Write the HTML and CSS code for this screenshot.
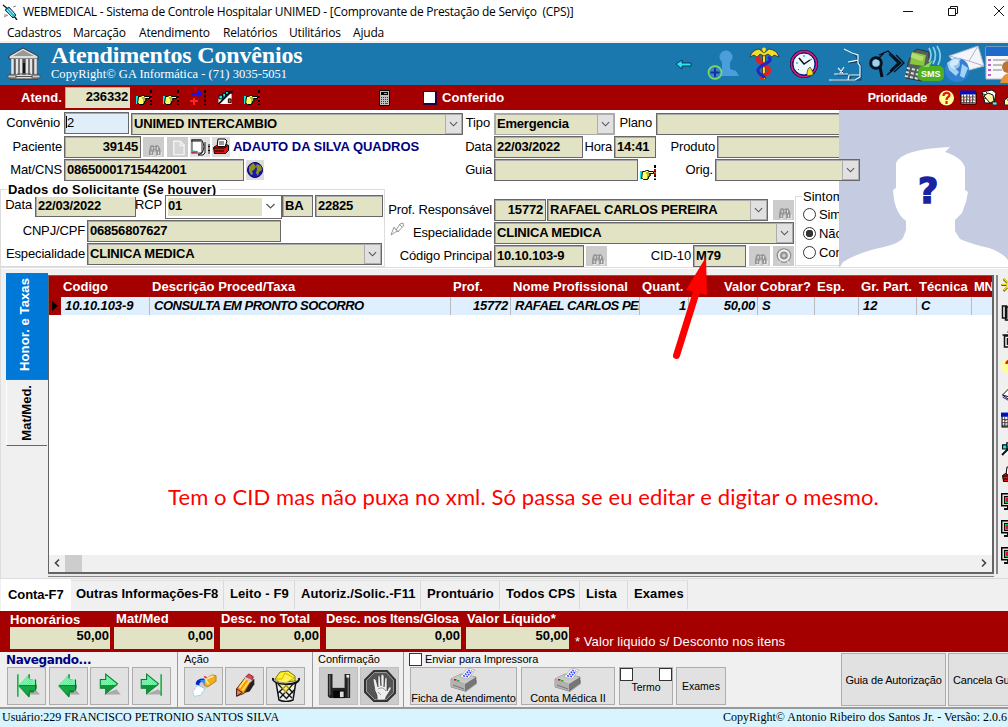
FILE: index.html
```html
<!DOCTYPE html>
<html lang="pt-BR">
<head>
<meta charset="utf-8">
<title>WEBMEDICAL</title>
<link rel="stylesheet" href="styles.css">
</head>
<body>
<svg class="defs" aria-hidden="true">
  <defs>
    <pattern id="checker" width="2" height="2" patternUnits="userSpaceOnUse"><rect width="2" height="2" fill="#ffff30"/><path d="M0 0h1v1H0zM1 1h1v1H1z" fill="#fff"/></pattern>
    <pattern id="greens" width="2" height="2" patternUnits="userSpaceOnUse"><rect width="2" height="2" fill="#3fe07a"/><path d="M0 0h1v1H0zM1 1h1v1H1z" fill="#a8ffd8"/></pattern>
  </defs>
  <symbol id="hand" viewBox="0 0 17 15">
    <path d="M0 6h2v8H0z" fill="#00f0f0"/><path d="M2.500 6.500h2l2-1h2v1h5v2h-4v1h1v1h-1v1h-1v2h-1v1h-4l-1-1h-1z" fill="#ffff66" stroke="#000"/><path d="M6 8h3M7 10h2M7 12h1" stroke="#000" stroke-width=".6"/>
    <path d="M15 0v15" stroke="#000" stroke-width="2" stroke-dasharray="3 1.500"/><path d="M14 4h2v2h-2zM14 8h2v2h-2z" fill="#d00"/>
  </symbol>
  <symbol id="bino" viewBox="0 0 22 22">
    <path d="M8 9h3v1h2V9h3l2 3 1 4v4h-5v-4h-1v-2h-1v2h-1v4H6v-4l1-5z" fill="#959595"/><path d="M9 11h1v3H9zM15 11h1v3h-1zM8 16h1v3H8zM16 16h1v3h-1zM12 11h1v2h-1z" fill="#eee"/><path d="M11.500 20v-3M19.500 21v-5M7 20.500h4M15 20.500h4" stroke="#f2f2f2" fill="none"/>
  </symbol>
  <symbol id="chev" viewBox="0 0 16 20"><path d="M4 8l4 4 4-4" fill="none" stroke="#555" stroke-width="1.200"/></symbol>
  <symbol id="grid" viewBox="0 0 17 15"><path d="M1 1.500h15v12H1z" fill="#fff" stroke="#000"/><path d="M0 0h16v4H0z" fill="#0010c0"/><path d="M1 6.500h14M1 9.500h14M1 12h14M3.500 4v9M6.500 4v9M9.500 4v9M12.500 4v9" stroke="#333" stroke-width=".8"/><path d="M4.500 7v5M7.500 5v6M10.500 7v5M13.500 5v6" stroke="#e00" stroke-width="1" stroke-dasharray="1 2"/></symbol>
  <symbol id="printer" viewBox="0 0 28 24">
    <path d="M5 20l11 4 11-8v-4z" fill="#aaa"/><path d="M1 11l10-5 15 3v6L15 23 1 19z" fill="#777" stroke="#555" stroke-width=".5"/><path d="M1 11l10-5 15 3-11 7z" fill="#c9c9c9"/><path d="M1 11l14 5v7L1 19z" fill="#b2b2b2"/><path d="M3 17l11 4" stroke="#777"/><path d="M10 9L18 0l7 2-7 9z" fill="#fff" stroke="#888" stroke-width=".5"/><path d="M13.500 8.500L19.500 2M16.500 9L22 3" stroke="#2638ff" stroke-width="1.900" stroke-dasharray="1.500 1"/><path d="M4 11h2.500v1.500H4z" fill="#e00"/><path d="M7 12h2.500v1.500H7z" fill="#0c0"/>
  </symbol>
  <symbol id="arrow" viewBox="0 0 22 24">
    <path d="M8 20h14l-5-6z" fill="#a8a8a8"/><path d="M2 12L12 1v5h3l4 5v3l-3 4h-4v5z" fill="#078a2c"/><path d="M2 11L12 1v5h6v5z" fill="url(#greens)"/><path d="M2 12h16v4h-6v5z" fill="#19a647"/><path d="M12 1v4M12 22v-4M18 6v10" stroke="#056b20"/>
  </symbol>
  <symbol id="calc" viewBox="0 0 11 16"><path d="M.5.5h10v15H.5z" fill="#c0c0c0" stroke="#000"/><path d="M2 2h7v3H2z" fill="#000"/><path d="M5 3h3v1H5z" fill="#0dd"/><path d="M2 7.500h7M2 9.500h7M2 11.500h7M2 13.500h4" stroke="#333" stroke-dasharray="1 1"/><path d="M6 13h3v1H6z" fill="#f00"/></symbol>
  <symbol id="boxes" viewBox="0 0 17 16"><path d="M1 15V8h8l6-6v13z" fill="#fff"/><path d="M1 15L13 3" stroke="#111" stroke-width="2"/><path d="M1.500 5.500h4v4h-4zM5.500 3.500h3v4h-3zM8.500 1.500h3v3h-3z" fill="#0cf0f0" stroke="#000"/><path d="M12 1h4v3h-4z" fill="#111"/><path d="M11.500 9.500h3v4h-3z" fill="#f33" stroke="#000"/></symbol>
  <symbol id="monitor" viewBox="0 0 18 17"><path d="M.7.700h16v12H.7z" fill="#ddd" stroke="#000" stroke-width="1.400"/><path d="M3 3h12v8H3z" fill="#000"/><path d="M4.500 4.500h10v5h-10z" fill="#e00050" stroke="#0d2" stroke-width="1.200"/><path d="M6 13h7v2h2v2H3v-2h3z" fill="#111"/></symbol>
  <symbol id="printred" viewBox="0 0 18 17"><path d="M6 1h7l2 2-2 6H5z" fill="#fff" stroke="#000"/><path d="M7 4h5M7 6h5" stroke="#333"/><path d="M1.500 9.500l3-2 2 1h6l2-2 2 1v5l-3 3h-11z" fill="#e01010" stroke="#000"/><path d="M2 10h10l3-2M3 13h9" stroke="#000" fill="none"/></symbol>
</svg>

<div class="app">
  <header class="titlebar">
    <svg class="app-icon" viewBox="0 0 16 16"><path d="M1 1l5 4M4 4l8 9M12 12l3 4" stroke="#111" stroke-width="1.300"/><path d="M3 6l4-3 7 8-3 3z" fill="#35b5cb" stroke="#145"/><path d="M5 6l5 6M7 5l5 5" stroke="#fff" stroke-width=".7"/><path d="M2 13l4-2M2 11h3M11 3l3-1" stroke="#888"/></svg>
    <h1 class="window-title">WEBMEDICAL - Sistema de Controle Hospitalar UNIMED - [Comprovante de Prestação de Serviço&nbsp; (CPS)]</h1>
    <svg class="window-controls" viewBox="0 0 110 20" fill="none" stroke="#111"><path d="M5 9.500h10M50.500 6.500h7v7h-7zM52.500 6V4.500h7v7H58M96 4l10 10M106 4L96 14"/></svg>
  </header>
  <nav class="menubar"><span>Cadastros</span><span>Marcação</span><span>Atendimento</span><span>Relatórios</span><span>Utilitários</span><span>Ajuda</span></nav>

  <section class="banner">
    <svg class="temple" viewBox="0 0 34 33"><path d="M2 9L16 1l15 8v3H2zM3 27h28v5H3z" fill="#ddd" stroke="#333"/><path d="M6 9l10-6 11 6z" fill="#999"/><path d="M4 12h26v14H4z" fill="#555"/><path d="M5.500 12v15M10 12v15M14 12v16M20 12v16M24 12v15M28.500 12v15" stroke="#e5e5e5" stroke-width="2.500"/><path d="M1 28h8v3H1zM25 28h8v3h-8zM10 27h14M9 29.500h16" fill="#ccc" stroke="#555"/><path d="M16 16h2v10h-2z" fill="#111"/></svg>
    <div class="banner-text"><h2>Atendimentos Convênios</h2><p>CopyRight© GA Informática - (71) 3035-5051</p></div>
    <svg class="banner-icons" viewBox="0 0 332 42">
      <path d="M0 21l6-4v3h9v3H6v3z" fill="#22e6ee" stroke="#024" stroke-width=".8"/>
      <g fill="#4a9edb"><circle cx="50" cy="14" r="6.500"/><path d="M46 17h8v9l6 2 3 5H38l8-5z"/></g><circle cx="39" cy="29.500" r="6.500" fill="#3488bc" stroke="#7be05e" stroke-width="1.600"/><path d="M39 25v9M34.500 29.500h9" stroke="#1b2caa" stroke-width="2"/>
      <g><path d="M88 6v30" stroke="#111" stroke-width="4"/><path d="M88 6v30" stroke="#f4dc25" stroke-width="2.500"/><path d="M74 14q2-7 9-8l5 4 5-4q8 1 10 8l-5-2-2 2-4-3-4 2-4-2-3 3-3-2z" fill="#f2de28" stroke="#222" stroke-width=".7"/><path d="M84 14c-10 4 11 8 9 14s-7 2-7 8" fill="none" stroke="#d22" stroke-width="4"/><path d="M92 14c9 5-12 8-10 14s6 3 6 7" fill="none" stroke="#2028c8" stroke-width="3"/><circle cx="88" cy="6.500" r="2" fill="#f5e025"/></g>
      <circle cx="128" cy="21" r="14" fill="#050520"/><circle cx="128" cy="21" r="12.500" fill="none" stroke="#d81b80" stroke-width="1.800"/><circle cx="128" cy="21" r="11" fill="#eef8ff" stroke="#001b80"/><path d="M123 15l5 6 6-4" fill="none" stroke="#111" stroke-width="1.500"/><path d="M128 12v2M120 20h2M122 27l1-1M136 16l-2 1" stroke="#08c"/><path d="M131 30l1-4 2-2 3 5v3l-6 1z" fill="#f5df20" stroke="#333" stroke-width=".7"/>
      <g fill="none" stroke="#102b40" stroke-width=".8" transform="translate(1 1)"><path d="M169 6l7 4 4 3v5l-8 1M180 14l4 8v10h-10l-1 4M160 31h14M155 36h29v-5M163 25l5 5"/></g><g fill="none" stroke="#e8f4fa" stroke-width="1.200"><path d="M168 6l8 4 6 2v5l-10 2 7-1M182 14v6l2 3v9h-11l-1 5M158 31h14M153 37h26l5-3v-4M162 25l5 5M168 24l-4 6"/></g>
      <g fill="none" stroke="#080d18"><path d="M203 12l9-4 13 12-14 12M213 11l9 9-8 8M216 12l8 8-9 9M220 12l8 8-10 9M201 17l7-7" stroke-width="1.300"/><circle cx="200" cy="20" r="5.500" stroke-width="2.500"/><path d="M204 24l2 10" stroke-width="3"/><circle cx="200" cy="20" r="3.500" fill="#a8cde8" stroke="none"/></g>
      <g><path d="M236 10l5-4 12 3v24l-8 5-15-3 2-15z" fill="#555f60" stroke="#2a3536"/><path d="M236 9l14 3-2 11-14-2z" fill="#8ac63d"/><path d="M235 12l12 4" stroke="#d9f5a8" stroke-width="5" opacity=".5"/><path d="M231 25l14 3M230 29l14 3M229 33l14 3" stroke="#d7dfdf" stroke-width="2" stroke-dasharray="3 2"/><rect x="242" y="23" width="26" height="15" rx="5" fill="#4faf22"/><path d="M253 24l4-7-10 7z" fill="#8fda55"/><path d="M253 5q4 7 0 14M257 4q5 8 0 17M261 3q6 9 1 19" fill="none" stroke="#7fd3ec" stroke-width="1.700"/><text class="sms" x="245" y="34">SMS</text></g>
      <g><path d="M273 13l29-10 6 20-22 6z" fill="#f4f5fb" stroke="#b0b8cc"/><path d="M273 13l20 5 9-15M293 18l15 5" fill="none" stroke="#a9b3cc"/><circle cx="281" cy="27" r="12" fill="#3280d4"/><path d="M271 20q9-7 14-4l-4 6-4 1 6 6-3 4-7-6zM286 21l6 4-4 10-4-2z" fill="#a4d4f5"/><circle cx="279" cy="21" r="5" fill="#fff" opacity=".5"/></g>
      <g><path d="M310 4h26v32h-26z" fill="#f8f8fa" stroke="#b9bfca"/><path d="M310 4h24v9h-24z" fill="#1b6acc"/><path d="M312 17h3M312 22h3M312 27h3M312 32h3" stroke="#c25ad5" stroke-width="2"/><path d="M317 17h18M317 22h9M317 27h9" stroke="#aaa" stroke-width="1.500"/><circle cx="332" cy="24" r="6" fill="#bc7434"/><path d="M324 40q2-9 9-10v10z" fill="#e8923a"/></g>
    </svg>
  </section>

  <section class="recordbar">
    <label class="record-label">Atend.</label><output class="box record-number">236332</output>
    <div class="hands"><svg><use href="#hand"/></svg><svg><use href="#hand"/></svg><svg viewBox="0 0 17 15"><path d="M1 3h7V0l5 3.500L8 7V5H1z" fill="#1414f0"/><path d="M3 8h2v2h3v2H5v3H3v-3H0v-2h3z" fill="#f22"/><path d="M15 0v15" stroke="#200" stroke-width="2" stroke-dasharray="3 1.500"/></svg><svg><use href="#boxes"/></svg><svg><use href="#hand"/></svg></div>
    <svg class="calc"><use href="#calc"/></svg>
    <label class="checked-label"><i class="bigcheck"></i>Conferido</label>
    <span class="priority">Prioridade</span>
    <div class="recordicons"><svg viewBox="0 0 16 16"><circle cx="8" cy="8" r="7.500" fill="url(#checker)"/><path d="M5 6c0-4 6-4 6-1 0 2-3 2-3 5M8 11v3" fill="none" stroke="#e31515" stroke-width="2.200"/></svg><svg><use href="#grid"/></svg><svg viewBox="0 0 17 16"><path d="M1 2l10-2 4 3-2 10H4z" fill="#fff" stroke="#111"/><path d="M2 4l10 2M3 8l9 2M5 2l8 9" stroke="#222"/><path d="M3 6l4-3 5 2 1 6-4 2z" fill="#fff7a0" stroke="#111"/><path d="M11 12h5v3h-4z" fill="#7de7e7" stroke="#333"/></svg><svg viewBox="0 0 16 16"><path d="M1 10l3-2V4l4-4 5 4v5l3 3v3H1z" fill="url(#checker)" stroke="#222"/><path d="M4 10h8" stroke="#d00" stroke-width="2"/></svg></div>
  </section>

  <main class="form">
    <div class="row r1"><label>Convênio</label><output class="box active"><i class="caret"></i>2</output><output class="box combo">UNIMED INTERCAMBIO<svg><use href="#chev"/></svg></output><label>Tipo</label><output class="box combo typebox">Emergencia<svg><use href="#chev"/></svg></output><label>Plano</label><output class="box"></output></div>
    <div class="row r2"><label>Paciente</label><output class="box right">39145</output><span class="mini"><svg><use href="#bino"/></svg></span><span class="mini"><svg viewBox="0 0 21 21"><path d="M6.500 4.500h7l4 4v10h-11zM13.500 5v4h4" fill="#d6d6d6" stroke="#f2f2f2" stroke-width="1.500"/></svg></span><span class="mini light"><svg viewBox="0 0 20 20"><path d="M2 3h10v13H2z" fill="#fff" stroke="#333"/><path d="M2 2v3M4 2v3M6 2v3M8 2v3M10 2v3" stroke="#111"/><path d="M12 4q4 5 0 12l-4 2h5l2-2V5" fill="#eee" stroke="#111"/><path d="M2 14l6 1" stroke="#00bcd0" stroke-width="1.500"/><path d="M1 16l6-1" stroke="#d22"/><path d="M19 7v10M18 9.500h2M18 13.500h2" stroke="#111"/></svg></span><span class="mini narrow"><svg viewBox="0 0 18 20"><use href="#printred" y="1" width="18" height="17"/></svg></span><strong class="patient">ADAUTO DA SILVA QUADROS</strong><label>Data</label><output class="box">22/03/2022</output><label>Hora</label><output class="box hour">14:41</output><label>Produto</label><output class="box"></output></div>
    <div class="row r3"><label>Mat/CNS</label><output class="box">08650001715442001</output><span class="mini globe"><svg viewBox="0 0 18 20"><circle cx="9" cy="10" r="7.500" fill="#1717bd" stroke="#05055c"/><path d="M3 7l4-4 2 2 1 2-2 3-2 1 1 3-2 1-2-4zM11 4l4 2 1 4-3 2-1 4-2-3 1-4-1-3z" fill="#8e9020"/></svg></span><label>Guia</label><output class="box">&nbsp;</output><svg class="pointer"><use href="#hand"/></svg><label>Orig.</label><output class="box combo origin"><svg><use href="#chev"/></svg></output></div>
    <div class="lower">
      <fieldset class="requester"><legend>Dados do Solicitante (Se houver)</legend>
        <div class="row q1"><label>Data</label><output class="box">22/03/2022</output><label>RCP</label><output class="box combo rcp"><b>01</b><svg><use href="#chev"/></svg></output><output class="box">BA</output><output class="box">22825</output></div>
        <div class="row q2"><label>CNPJ/CPF</label><output class="box">06856807627</output></div>
        <div class="row q3"><label>Especialidade</label><output class="box combo">CLINICA MEDICA<svg><use href="#chev"/></svg></output></div>
      </fieldset>
      <div class="responsible">
        <div class="row p1"><label>Prof. Responsável</label><output class="box right">15772</output><output class="box combo">RAFAEL CARLOS PEREIRA<svg><use href="#chev"/></svg></output><span class="mini"><svg><use href="#bino"/></svg></span></div>
        <div class="row p2"><svg class="pin" viewBox="0 0 14 14"><path d="M1 13l3-8 2 3 4-6 3-1 .5 3-5 5-3 1zM6 8l3 2M9 2l3 3" fill="none" stroke="#999"/></svg><label>Especialidade</label><output class="box combo">CLINICA MEDICA<svg><use href="#chev"/></svg></output></div>
        <div class="row p3"><label>Código Principal</label><output class="box">10.10.103-9</output><span class="mini"><svg><use href="#bino"/></svg></span><label>CID-10</label><output class="box">M79</output><span class="mini"><svg><use href="#bino"/></svg></span><span class="mini"><svg viewBox="0 0 21 21"><g fill="none"><circle cx="11" cy="10" r="7" stroke="#909090" stroke-width="1.500"/><circle cx="11" cy="10" r="5.500" stroke="#f5f5f5" stroke-width="1.500"/><circle cx="11" cy="10" r="3" stroke="#909090" stroke-width="2"/></g><path d="M14 15l3 4M8 15l-3 3" stroke="#eee"/></svg></span></div>
      </div>
      <fieldset class="symptoms"><legend>Sintomas</legend><label><i></i>Sim</label><label><i class="on"></i>Não</label><label><i></i>Continuo</label></fieldset>
    </div>
    <svg class="photo" viewBox="0 0 169 157"><path fill="#c5cce1" d="M0 0h169v157H0z"/><path d="M1 157L4 152Q20 142 45 137 61 133 64 128L67 120V111Q60 106 57 97L55 90 54 80 57 78V53Q63 39 111 37L106 42Q124 48 126 58V80L129 82 127 92 123 103 116 110V121L121 129Q132 134 150 138 164 143 169 150V157z" fill="#fff"/><text class="question" x="79" y="93">?</text></svg>
  </main>

  <section class="workspace">
    <div class="side-tabs"><div class="side-tab selected"><span>Honor. e Taxas</span></div><div class="side-tab"><span>Mat/Med.</span></div></div>
    <div class="grid-panel">
      <div class="grid-row head"><i></i><b>Codigo</b><b>Descrição Proced/Taxa</b><b>Prof.</b><b>Nome Profissional</b><b>Quant.</b><b class="right">Valor</b><b>Cobrar?</b><b>Esp.</b><b>Gr. Part.</b><b>Técnica</b><b class="last">MN</b></div>
      <div class="grid-row data"><i><svg viewBox="0 0 12 18"><path d="M3 4l6 5-6 5z"/></svg></i><b>10.10.103-9</b><b>CONSULTA EM PRONTO SOCORRO</b><b class="right">15772</b><b>RAFAEL CARLOS PEREIRA</b><b class="right">1</b><b class="right">50,00</b><b>S</b><b></b><b>12</b><b>C</b><b></b></div>
      <div class="grid-empty"></div>
      <div class="scrollbar"><svg viewBox="0 0 16 16"><path d="M10 4.500L6.500 8l3.500 3.500" fill="none" stroke="#444" stroke-width="1.600"/></svg><i></i><svg viewBox="0 0 16 16"><path d="M6 4.500L9.500 8 6 11.500" fill="none" stroke="#444" stroke-width="1.600"/></svg></div>
    </div>
    <aside class="tools">
      <svg viewBox="0 0 17 17"><path d="M8 0v4M0 8h5M2 2l4 4M2 14l4-4" stroke="#222" stroke-width="2"/><path d="M8 0v4M0 7.500h5M2 1.500l4 4M2 13.500l4-4" stroke="#f0e000" stroke-width="1.600"/><circle cx="9" cy="8" r="4" fill="#ffef20"/></svg>
      <svg viewBox="0 0 17 17"><path d="M1 2h4v12H1zM4 3h3v13H4zM7 4h8v13H7z" fill="#fff" stroke="#111" stroke-width="1.500"/></svg>
      <svg viewBox="0 0 17 17"><path d="M3 5h10v11H3zM1 4h14M6 1h4v3M6 7v7M9 7v7" fill="none" stroke="#111" stroke-width="1.500"/></svg>
      <svg viewBox="0 0 17 17"><circle cx="8" cy="8" r="8" fill="url(#checker)"/><path d="M5 6c0-4 6-4 6-1 0 2-3 2-3 5M8 12v2" fill="none" stroke="#e31515" stroke-width="2.500"/></svg>
      <svg viewBox="0 0 17 17"><path d="M1 10l8-8 7 4-8 9zM1 10l7 2" fill="#fff" stroke="#111"/><path d="M1 12l7 4 8-8" stroke="#23b" fill="none"/></svg>
      <svg><use href="#grid"/></svg><svg><use href="#boxes"/></svg><svg><use href="#printred"/></svg><svg><use href="#monitor"/></svg><svg><use href="#monitor"/></svg><svg><use href="#monitor"/></svg>
    </aside>
    <p class="annotation">Tem o CID mas não puxa no xml. Só passa se eu editar e digitar o mesmo.</p>
  </section>

  <nav class="tabs"><span class="current">Conta-F7</span><span>Outras Informações-F8</span><span>Leito - F9</span><span>Autoriz./Solic.-F11</span><span>Prontuário</span><span>Todos CPS</span><span>Lista</span><span>Exames</span></nav>

  <section class="totals">
    <div class="t1"><label>Honorários</label><output>50,00</output></div><div class="t2"><label>Mat/Med</label><output>0,00</output></div><div class="t3"><label>Desc. no Total</label><output>0,00</output></div><div class="t4"><label>Desc. nos Itens/Glosa</label><output>0,00</output></div><div class="t5"><label>Valor Líquido*</label><output>50,00</output></div><p>* Valor liquido s/ Desconto nos itens</p>
  </section>

  <section class="actions">
    <div class="group nav-group"><h3>Navegando...</h3><div class="buttons">
      <button><svg viewBox="0 0 24 26"><path d="M3.500 2v21" stroke="#12b83a" stroke-width="1.500"/><use href="#arrow" x="2" y="1" width="22" height="24"/></svg></button>
      <button><svg viewBox="0 0 24 26"><use href="#arrow" x="1" y="1" width="22" height="24"/></svg></button>
      <button><svg viewBox="0 0 24 26"><path d="M6 21h16l-4-5z" fill="#aaa"/><path d="M3 7h5V2l11 9-11 9v-5H3z" fill="url(#greens)" stroke="#07802a"/><path d="M3 12h16l-11 8v-5H3z" fill="#14933c"/></svg></button>
      <button><svg viewBox="0 0 24 26"><path d="M6 21h16l-4-5z" fill="#aaa"/><path d="M2 7h5V2l11 9-11 9v-5H2z" fill="url(#greens)" stroke="#07802a"/><path d="M2 12h16l-11 8v-5H2z" fill="#14933c"/><path d="M20.500 2v20" stroke="#12b83a" stroke-width="1.500"/></svg></button></div></div>
    <div class="group action-group"><h3>Ação</h3><div class="buttons">
      <button><svg viewBox="0 0 28 28"><path d="M9 9l12 2-13 14z" fill="#ccc"/><path d="M14 7l9-5 4 1v6l-9 6-4-2z" fill="#f4ad18" stroke="#8e6a15" stroke-width=".7"/><path d="M15 7l9-4M16 8l3 4" stroke="#ffe29a" stroke-width="2"/><path d="M5 12q0-6 9-6l1 3q-7 0-6 5z" fill="#0a22ce"/><path d="M9 8l6-1v5z" fill="#2e91ff"/><path d="M2 20l5-7 8 4-5 7-7 1z" fill="#fff" stroke="#4fc0e6" stroke-dasharray="1 1"/><path d="M14 4l3 1" stroke="#e22" stroke-width="1.500"/></svg></button>
      <button><svg viewBox="0 0 28 28"><path d="M8 23l11-3 5-8v-6z" fill="#222"/><path d="M5 17L15 4l6 4-8 14-8 3z" fill="#f7901b" stroke="#5a2d10"/><path d="M8 16l8-11M11 19l8-11" stroke="#ffe14c" stroke-width="2"/><path d="M15 4l3-3 5 3-2 5z" fill="#e7405d" stroke="#722"/><path d="M14 5l7 4" stroke="#ccc" stroke-width="2.500"/><path d="M5 17l6 4-6 4z" fill="#d08b75" stroke="#411"/></svg></button>
      <button><svg class="large" viewBox="0 0 30 32"><path d="M5 12l20-1-3 19q-7 3-14 0z" fill="#eee" stroke="#111" stroke-width="1.500"/><path d="M7 14l14 14M13 13l9 10M8 21l8 8M23 13L9 28M18 13L7 23M23 20l-8 9" stroke="#111" stroke-width="1.300"/><path d="M9 14h12l-7 10z" fill="#ffef26" opacity=".6"/><path d="M4 9l5-7 8-1 7 5v5l-14 1z" fill="#ffef26" stroke="#76720a"/><path d="M4 9h7l3-6 9 5-8 5-7-1z" fill="#fff04c" stroke="#998c12" stroke-width=".6"/><path d="M2 8q-1 5 13 6 14 0 13-6" fill="none" stroke="#111" stroke-width="2"/><path d="M3 10q3 3 12 3 11-1 12-4" fill="none" stroke="#ddd" stroke-width=".8"/></svg></button></div></div>
    <div class="group confirm-group"><h3>Confirmação</h3><div class="buttons">
      <button class="disabled"><svg viewBox="0 0 28 28"><path d="M2 1h24v26H4l-2-2z" fill="#222"/><path d="M7 1h13v15H7z" fill="#ccc"/><path d="M8 19h12v8H8z" fill="#070707"/><path d="M15 20h4v6h-4z" fill="#ddd"/><path d="M4 2v22M24 5v21" stroke="#686868" stroke-width="1.500"/><path d="M22 2h3v3h-3z" fill="#eee"/></svg></button>
      <button class="disabled"><svg class="large" viewBox="0 0 32 32"><path d="M10 1h13l8 9v13l-8 8H10l-9-9V10z" fill="#555" stroke="#333" stroke-width="2"/><path d="M10.500 2.500h12l7 8v12l-7 7h-12l-8-8v-11z" fill="none" stroke="#aaa" stroke-width=".8"/><path d="M9 9q2-1 3 1l2 7V7q0-3 2-1l1 10V5q2-2 3 1v11l1-9q2-2 2 1v12l2-4q3-1 2 2l-5 8-1 3H13q1-5-2-9z" fill="#eee" stroke="#333" stroke-width=".6"/><path d="M14 19q5-3 8 2M14 22l3 3" stroke="#999" fill="none"/></svg></button></div></div>
    <div class="group print-group"><h3><i class="check"></i>Enviar para Impressora</h3><div class="buttons"><button class="ficha"><svg><use href="#printer"/></svg><span>Ficha de Atendimento</span></button><button class="conta"><svg><use href="#printer"/></svg><span>Conta Médica II</span></button><button class="termo"><i class="check"></i><span>Termo</span><i class="check"></i></button><button class="exams">Exames</button></div></div>
    <div class="guides"><button>Guia de Autorização</button><button class="cancel">Cancela Guia</button></div>
  </section>
  <footer class="status"><span>Usuário:229 FRANCISCO PETRONIO SANTOS SILVA</span><span>CopyRight© Antonio Ribeiro dos Santos Jr. - Versão: 2.0.6</span></footer>
  <svg class="red-arrow" viewBox="0 0 45 110"><path d="M8.500 101.500L29 36" stroke="#f00" stroke-width="7" stroke-linecap="round"/><path d="M38 3L18 36l21 5z" fill="#f00"/></svg>
</div>
</body>
</html>
```
FILE: styles.css
```css
* { box-sizing: border-box; }
body { margin: 0; background: #fff; font: 13px/16px "Liberation Sans", Arial, sans-serif; color: #000; }
h1, h2, h3, p { margin: 0; font-weight: normal; }
button { font: inherit; color: inherit; padding: 0; margin: 0; border: 1px solid #adadad; background: #e1e1e1; }
svg { display: block; flex: none; }
.defs { position: absolute; width: 0; height: 0; }
.app { position: relative; width: 1008px; height: 727px; overflow: hidden; display: flex; flex-direction: column; }
.app > section, .app > nav, .app > header, .app > main, .app > footer { flex: none; }

.titlebar { height: 23px; display: flex; align-items: center; padding-left: 2px; }
.app-icon { width: 16px; height: 16px; margin-right: 5px; }
.window-title { font: 12px/16px "Open Sans", sans-serif; letter-spacing: -.26px; white-space: nowrap; }
.window-controls { width: 110px; height: 20px; margin-left: auto; }
.menubar { height: 20px; border-bottom: 2px solid #f0f0f0; display: grid; grid-template-columns: 66px 66px 84px 66px 64px 60px; padding-left: 7px; font: 12px/19px "Open Sans", sans-serif; letter-spacing: -.2px; }

.banner { height: 42px; background: #1b78ae; color: #fff; display: flex; }
.temple { width: 34px; height: 33px; margin: 4px 10px 0 7px; }
.banner-text { font-family: "Liberation Serif", serif; white-space: nowrap; }
.banner-text h2 { font-size: 24px; line-height: 24px; font-weight: bold; letter-spacing: -.18px; }
.banner-text p { font-size: 12.500px; line-height: 14px; letter-spacing: .03px; }
.banner-icons { width: 332px; height: 42px; margin-left: auto; }
.sms { font: bold 9px "Liberation Sans", sans-serif; fill: #fff; }

.recordbar { height: 25px; background: #a40000; color: #fff; display: flex; align-items: center; font-weight: bold; }
.record-label { width: 65px; padding-right: 3px; text-align: right; letter-spacing: .1px; }
.box { background: #e2e2c4; color: #000; border: 1px solid #686868; box-shadow: inset 1px 1px #aaa; display: block; height: 22px; padding: 2px 2px; font-weight: bold; line-height: 16px; letter-spacing: -.2px; white-space: nowrap; overflow: hidden; }
.record-number { width: 65px; height: 21px; text-align: right; border: 0; }
.hands { display: grid; grid-template-columns: repeat(5, 27px); margin-left: 6px; }
.hands svg { width: 17px; height: 15px; }
.calc { width: 11px; height: 16px; margin-left: 108px; }
.checked-label { display: flex; gap: 5px; margin-left: 33px; letter-spacing: .1px; align-items: center; }
.bigcheck { width: 14px; height: 14px; background: #fff; border: 1px solid #200040; border-width: 1px 2px 2px 1px; }
.priority { margin-left: auto; font-size: 12.500px; letter-spacing: -.25px; }
.recordicons { display: grid; grid-template-columns: repeat(4, 21.500px); width: 70px; margin-left: 11px; overflow: hidden; }
.recordicons svg { width: 17px; height: 16px; }

.form { position: relative; height: 157px; overflow: hidden; }
.row { display: grid; height: 23px; }
.row > .box { margin-right: 2px; }
.row label { justify-self: end; white-space: nowrap; padding: 3px 2px 0 0; letter-spacing: -.15px; }
.r1 { height: 26px; padding-top: 3px; grid-template-columns: 64px 67px 334px 29px 123px 39px 204px; }
.row.r1 > label { padding-right: 4px; padding-top: 2px; }
.r2 { grid-template-columns: 64px 79px 24px 23px 22px 21px 232px 29px 91px 29px 55px 48px 143px; }
.r3 { grid-template-columns: 64px 182px 219px 29px 146px 48px 27px 145px; }
.right { text-align: right; }
.box.active { background: #e0eefa; margin-top: -1px; margin-right: 2px; font-weight: normal; padding-left: 1px; }
.row > .hour { margin-right: 13px; }
.caret { display: inline-block; width: 1px; height: 12px; background: #000; vertical-align: -1px; }
.combo { position: relative; display: flex; justify-content: space-between; padding: 2px 0 0 2px; }
.combo svg { width: 17px; height: 20px; margin: -2px 0 0; background: #e1e1e1; border: 1px solid #adadad; }
.typebox { border-color: #aaa; }
.row > .origin { margin: 0; z-index: 3; justify-content: flex-end; }
.patient { color: #000080; letter-spacing: -.03px; padding-top: 3px; white-space: nowrap; }
.mini { width: 21px; height: 20px; margin-top: 1px; background: #ccc; }
.mini svg { width: 100%; height: 20px; }
.mini.light { width: 20px; background: #e3e3e3; }
.mini.narrow, .mini.globe { width: 18px; background: #ddd; }
.pointer { width: 17px; height: 15px; margin-top: 6px; }

.lower { display: flex; height: 85px; }
fieldset { margin: 0; padding: 0; min-width: 0; border: 1px solid #dcdcdc; }
.requester { position: relative; width: 385px; height: 78px; margin-top: 7px; }
.requester legend { position: absolute; top: -8px; left: 6px; background: #fff; padding: 0 4px 0 1px; font-weight: bold; letter-spacing: .14px; line-height: 15px; }
.requester .row { margin-left: -1px; }
.q1 { height: 25px; margin-top: 5px; grid-template-columns: 35px 103px 27px 117px 33px 70px; }
.q2 { grid-template-columns: 87px 196px; }
.q3 { grid-template-columns: 87px 297px; }
.row.q1 > label { padding: 2px 3px 0 0; }
.row.q1 > .rcp { height: 24px; margin-right: 0; background: #fff; box-shadow: none; padding: 2px 2px; }
.rcp b { width: 94px; height: 18px; background: #e2e2c4; }
.rcp svg { background: #fff; border: 0; }
.responsible { width: 410px; padding-top: 17px; }
.p1 { grid-template-columns: 109px 53px 226px 22px; }
.row.p1 > .box:nth-child(2) { margin-right: 1px; }
.row.p1 > .combo { margin-right: 5px; }
.p2 { grid-template-columns: 20px 89px 302px; }
.pin { width: 14px; height: 14px; margin-left: 5px; }
.p3 { grid-template-columns: 109px 92px 22px 85px 56px 24px 22px; }
.row.p3 > .box:nth-of-type(2) { margin-right: 3px; }
.symptoms { position: relative; width: 90px; height: 70px; margin-top: 14px; padding-top: 8px; }
.symptoms legend { position: absolute; top: -8px; left: 6px; padding: 0 1px; background: #fff; }
.symptoms label { display: flex; gap: 3px; height: 19px; padding-left: 7px; align-items: center; letter-spacing: -.1px; }
.symptoms i { width: 13px; height: 13px; border: 1px solid #333; border-radius: 50%; }
.symptoms i.on { background: radial-gradient(#333 0 3.500px, #fff 4px); }
.photo { position: absolute; z-index: 2; left: 839px; top: 0; width: 169px; height: 157px; }
.question { font: bold 35px "DejaVu Sans", sans-serif; fill: #1a23a0; stroke: #1a23a0; stroke-width: 1.500px; }

.workspace { position: relative; height: 311px; background: #f0f0f0; border-top: 1px solid #ddd; border-left: 1px solid #ddd; display: flex; box-shadow: inset 0 1px #fff; }
.side-tabs { width: 47px; padding: 5px 0 0 5px; }
.side-tab { width: 41px; height: 66px; display: grid; place-items: center; font-weight: bold; border-bottom: 1px solid #666; border-left: 1px solid #fff; }
.side-tab span { writing-mode: vertical-rl; transform: rotate(180deg); white-space: nowrap; letter-spacing: 0; }
.side-tab.selected { width: 42px; height: 107px; background: #0078d7; color: #fff; border-left: 0; padding: 0 4px 4px 0; }
.side-tab.selected span { letter-spacing: .1px; }
.grid-panel { width: 946px; height: 299px; margin-top: 7px; background: #fff; border: 2px solid #646464; border-left-width: 1px; border-top-width: 1px; display: flex; flex-direction: column; box-shadow: 0 2px #e8e8e8, 0 3px #888, 2px 0 #eee, 4px 0 #888; }
.grid-row { display: grid; flex: none; grid-template-columns: 12px 89px 301px 60px 129px 49px 69px 57px 44px 58px 55px 1fr; white-space: nowrap; }
.grid-row b { overflow: hidden; padding: 0 2px; }
.grid-row .last { letter-spacing: -.3px; padding-right: 0; }
.head { height: 21px; background: #a40000; color: #fff; line-height: 21px; letter-spacing: .05px; }
.data { height: 18px; background: #dfeffe; font-style: italic; line-height: 18px; letter-spacing: -.5px; }
.data > i { background: #a40000; }
.data > b { border-right: 1px solid #b8bcc0; padding: 0 2px 0 4px; }
.data > b:nth-child(n+9) { letter-spacing: 0; }
.data > b:nth-child(2) { letter-spacing: -.1px; }
.data > b:last-child { border: 0; }
.data > .right { padding-right: 2px; letter-spacing: -.25px; }
.grid-row b.right { text-align: right; }
.grid-empty { flex: 1; }
.scrollbar { display: flex; height: 17px; background: #f0f0f0; }
.scrollbar svg { width: 16px; height: 16px; }
.scrollbar i { width: 17px; background: #cdcdcd; }
.scrollbar svg:last-child { margin-left: auto; }
.tools { display: grid; grid-auto-rows: 27px; margin: 9px 0 0 7px; width: 7px; overflow: hidden; height: 299px; }
.tools svg { width: 18px; height: 17px; }
.annotation { position: absolute; left: 167px; top: 214px; font: 22px/30px Lato, sans-serif; letter-spacing: .11px; color: #f00; white-space: nowrap; }

.tabs { height: 33px; padding-left: 1px; background: #f0f0f0; border-top: 1px solid #dcdcdc; display: grid; grid-template-columns: 70px 153px 71px 126px 79px 80px 48px 60px; font-weight: bold; line-height: 26px; letter-spacing: .1px; }
.tabs span { height: 29px; margin-top: 1px; padding-left: 6px; border-right: 1px solid #d9d9d9; border-top: 1px solid #e2e2e2; white-space: nowrap; }
.tabs span:nth-child(2) { padding-left: 5px; letter-spacing: 0; }
.tabs .current { background: #fff; height: 32px; margin-top: 0; padding: 3px 0 0 7px; border: 0; letter-spacing: -.1px; }

.totals { height: 41px; background: #a40000; color: #fff; display: flex; padding-left: 10px; }
.totals div { width: 100px; margin-right: 4px; font-weight: bold; }
.totals label { display: block; height: 16px; white-space: nowrap; letter-spacing: .1px; padding-left: 1px; }
.totals .t1 label { padding-left: 0; padding-top: 1px; }
.totals output { display: block; height: 22px; background: #e2e2c4; color: #000; text-align: right; padding-right: 1px; line-height: 17px; letter-spacing: 0; }
.totals .t2, .totals .t3 { margin-right: 6px; }
.totals .t2 label { padding-left: 2px; }
.totals .t4 { width: 135px; margin-right: 5px; }
.totals .t4 label { letter-spacing: -.1px; padding-left: 0; }
.totals .t5 { width: 103px; margin-right: 6px; }
.totals p { padding-top: 23px; letter-spacing: .08px; }

.actions { height: 55px; background: #f0f0f0; display: flex; position: relative; font-size: 11px; }
.group { height: 55px; display: flex; flex-direction: column; border-right: 1px solid #999; }
.group h3 { height: 15px; font-size: 11px; line-height: 14px; white-space: nowrap; letter-spacing: -.05px; }
.buttons { display: flex; gap: 2px; }
.buttons button { width: 39px; height: 38px; display: grid; place-items: center; }
.buttons svg { width: 26px; height: 28px; }
.buttons svg.large { width: 32px; height: 32px; }
.nav-group { width: 178px; padding-left: 7px; }
.nav-group .buttons { gap: 2.700px; }
.group.nav-group h3 { font: bold 12px/16px "DejaVu Sans", sans-serif; height: 15px; margin-left: -1px; letter-spacing: -.4px; color: #000080; }
.action-group { width: 135px; padding-left: 6px; }
.confirm-group { width: 91px; padding-left: 6px; }
.confirm-group h3 { margin-left: -1px; }
.buttons .disabled { background: #ccc; border-color: #bfbfbf; }
.print-group { border: 0; padding-left: 6px; }
.print-group h3 { display: flex; gap: 3px; margin-left: -1px; }
.check { width: 13px; height: 13px; background: #fff; border: 1px solid #333; flex: none; }
.print-group h3 .check { margin-top: 1px; }
.print-group .buttons { gap: 4px; }
.buttons .ficha { width: 107px; display: flex; flex-direction: column; align-items: center; }
.buttons .conta { width: 94px; display: flex; flex-direction: column; align-items: center; }
.buttons .ficha svg, .buttons .conta svg { width: 28px; height: 24px; }
.buttons .ficha span, .buttons .conta span { line-height: 13px; white-space: nowrap; letter-spacing: -.1px; }
.buttons .termo { width: 54px; display: flex; justify-content: space-between; align-items: flex-start; }
.termo span { margin: 11px -12px 0; font-size: 10.500px; }
.buttons .exams { width: 50px; margin-left: -1px; font-size: 10.500px; }
.guides { display: flex; gap: 2px; margin-left: auto; padding-top: 1px; width: 167px; flex: none; overflow: hidden; }
.guides button { width: 105px; height: 53px; flex: none; white-space: nowrap; letter-spacing: -.15px; }
.guides .cancel { width: 73px; text-align: left; padding-left: 4px; }

.status { height: 20px; background: #d7f4ff; border-top: 2px solid #999; display: flex; justify-content: space-between; padding: 0 1px 0 2px; font: 12px/17px "Liberation Serif", serif; }
.red-arrow { position: absolute; z-index: 5; left: 668px; top: 254px; width: 45px; height: 110px; }
```
